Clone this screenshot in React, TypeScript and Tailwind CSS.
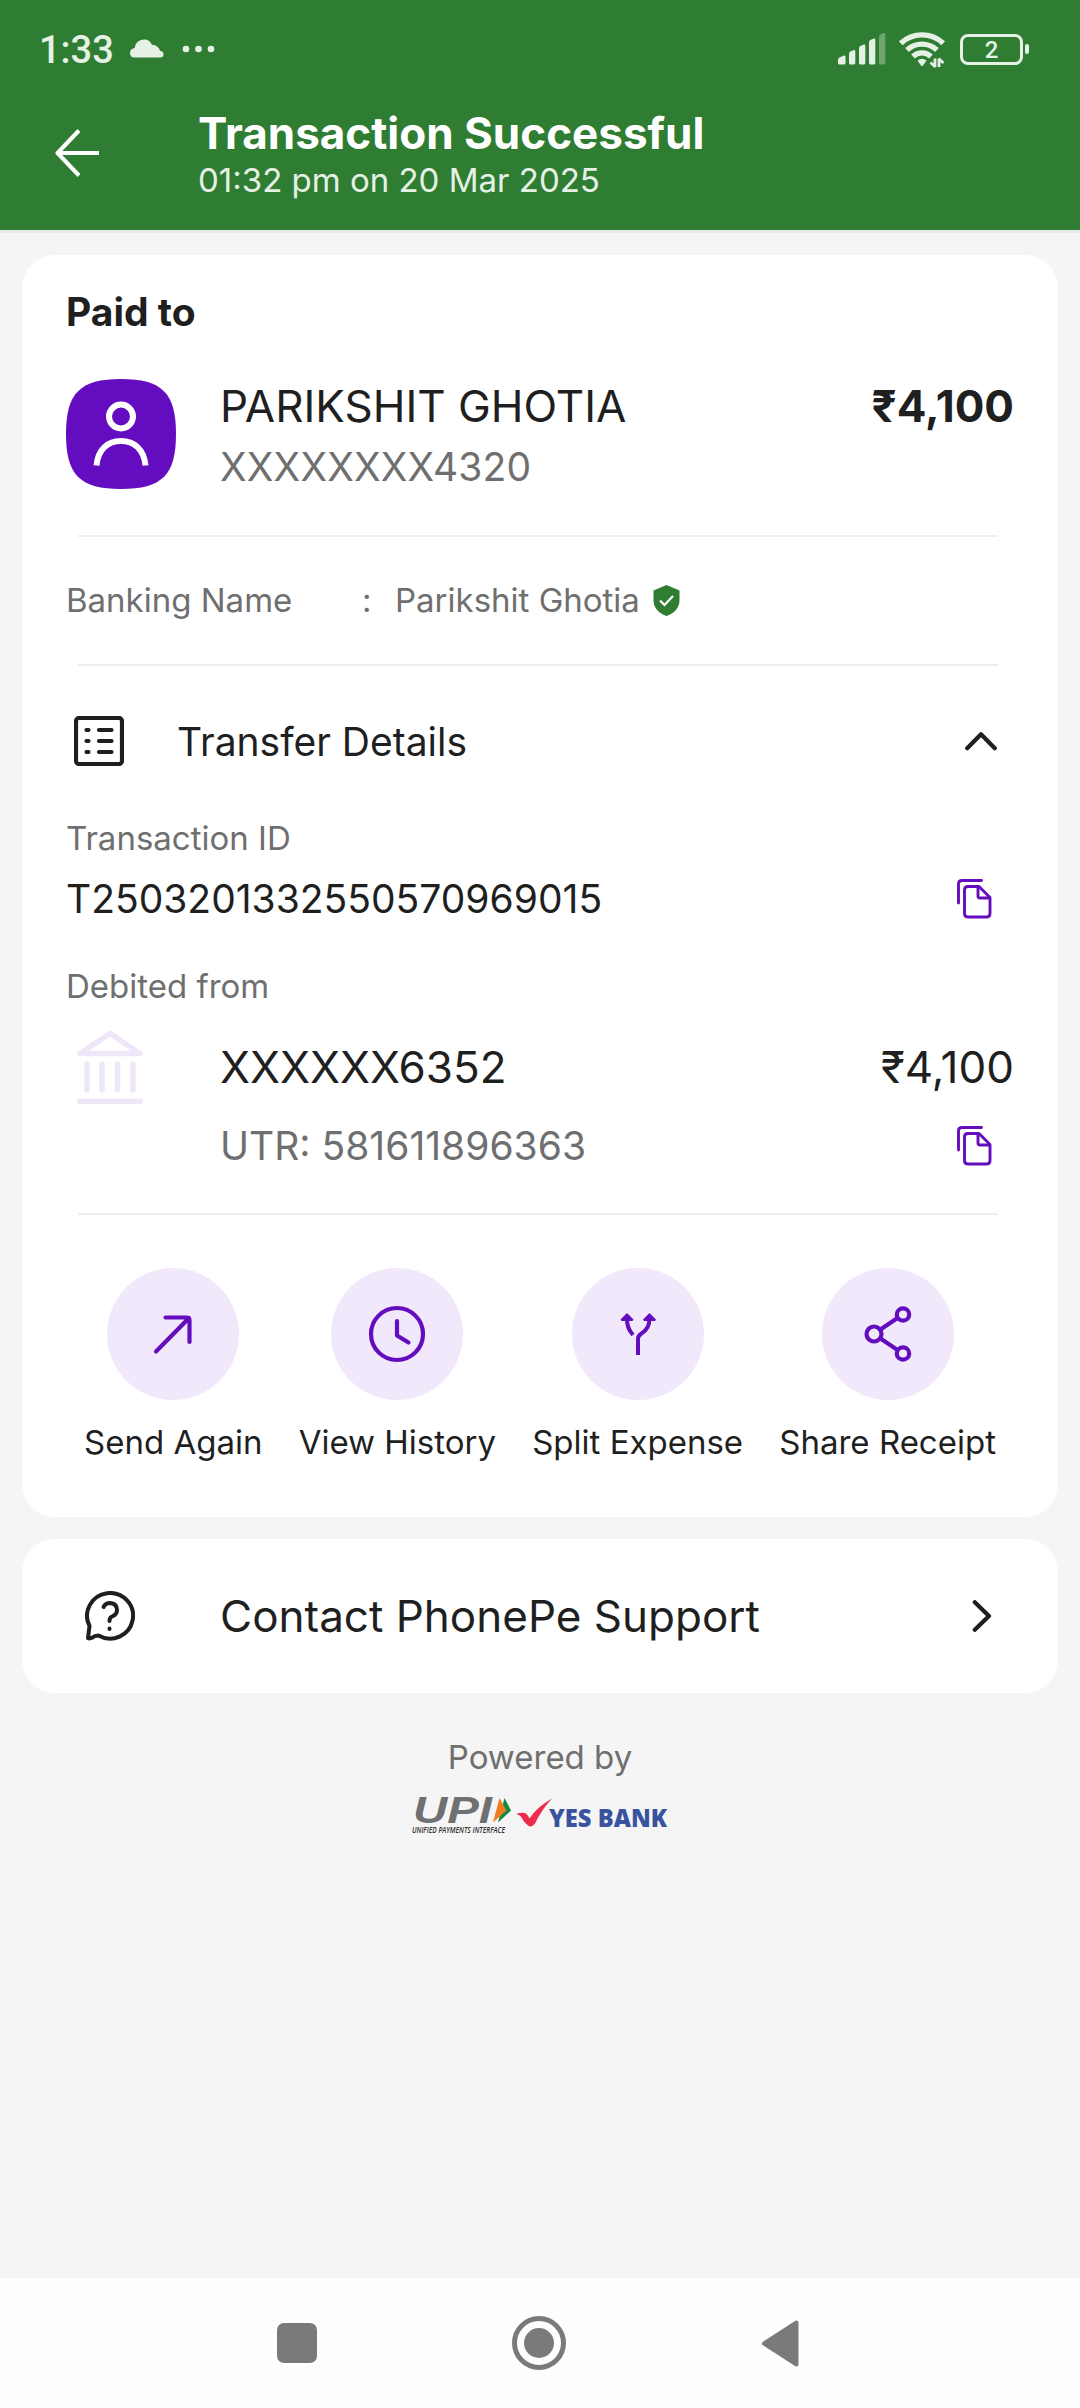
import type { ReactNode } from 'react';

const labelClass = 'text-[33px] leading-10 text-[#6f6f6f]';
const valueClass = 'text-[39px] leading-[48px]';

function StatusBar() {
  return (
    <div className="flex h-[76px] items-center justify-between pt-[22px] pr-[51px] pl-[39px] text-[#e6f1e6]">
      <div className="flex items-center">
        <span className="w-[91px] pt-0.5 font-['Roboto'] text-[38px] leading-[54px] font-medium">
          1:33
        </span>
        <svg width="34" height="20" viewBox="0 0 34 20" className="-mt-0.5" fill="currentColor">
          <path d="M4.500 19.500A4.500 4.800 0 0 1 0 15 5 5 0 0 1 4.700 10 9.200 9.500 0 0 1 22 6.800 8 8 0 0 1 30 13 3.300 3.300 0 0 1 31 19.500Z" />
        </svg>
        <svg width="34" height="8" viewBox="0 0 34 8" className="ml-[18px]" fill="currentColor">
          <circle cx="4" cy="4" r="3.300" />
          <circle cx="16.500" cy="4" r="3.300" />
          <circle cx="29" cy="4" r="3.300" />
        </svg>
      </div>
      <div className="flex items-center">
        <svg width="49" height="32" viewBox="0 0 49 32" fill="currentColor">
          <path d="M0 27q0-2 1.500-2.600l4-1.700q2-.7 2 1V30q0 1.500-1.500 1.500H1.500Q0 31.500 0 30Z" />
          <path d="M11 21q0-2 1.300-2.500l3-1.300q2-.7 2 1V30q0 1.500-1.500 1.500h-3.300Q11 31.500 11 30Z" />
          <path d="M21 15.500q0-2 1.300-2.500l3-1.300q2-.7 2 1V30q0 1.500-1.500 1.500h-3.300Q21 31.500 21 30Z" />
          <path d="M31 9.500q0-2 1.300-2.500l3-1.300q2-.7 2 1V30q0 1.500-1.500 1.500h-3.300Q31 31.500 31 30Z" />
          <path
            opacity=".35"
            d="M41 4q0-2 1.300-2.500l3-1.300q2-.7 2 1V30q0 1.500-1.500 1.500h-3.300Q41 31.500 41 30Z"
          />
        </svg>
        <svg width="47" height="38" viewBox="0 0 47 38" className="ml-3" fill="none">
          <g stroke="currentColor" strokeWidth="5.400">
            <path d="M1.800 13.300A31 31 0 0 1 44.200 13.300" />
            <path d="M8 20A22 22 0 0 1 38 20" />
            <path d="M14 26.500A13 13 0 0 1 32 26.500" />
          </g>
          <path d="M18.500 30.500q4.500-3.500 9 0L24 35.500q-1 1-2 0Z" fill="currentColor" />
          <path
            d="M36 28.500v8.500M36.500 37l-5-4.500M40 37v-8.500M39.500 28.500l5 4.500"
            stroke="currentColor"
            strokeWidth="2.800"
          />
        </svg>
        <div className="ml-[14px] flex h-[31px] w-[63px] items-center justify-center rounded-[8px] border-[3px] border-current pt-0.5 font-['Roboto'] text-[24px] leading-none font-medium">
          2
        </div>
        <div className="ml-[2px] h-[10px] w-1 rounded-sm bg-current" />
      </div>
    </div>
  );
}

function Divider() {
  return <div className="mr-4 ml-3 h-[2px] bg-[#eeeeee]" />;
}

function CopyIcon() {
  return (
    <svg
      width="35"
      height="40"
      viewBox="0 0 35 40"
      className="mr-[22px]"
      fill="none"
      stroke="#640dbe"
      strokeWidth="2.900"
      strokeLinecap="round"
      strokeLinejoin="round"
    >
      <path d="M1.500 24V5Q1.500 1.500 5 1.500H24.500" />
      <path d="M11 7.500H22L33 18.500V34.500Q33 38 29.500 38H11Q7.500 38 7.500 34.500V11Q7.500 7.500 11 7.500Z" />
      <path d="M21 8V17Q21 19 23 19H32.500" />
    </svg>
  );
}

function BankIcon() {
  return (
    <svg
      width="66"
      height="74"
      viewBox="0 0 66 74"
      fill="none"
      stroke="#efe6f9"
      strokeWidth="5.400"
      strokeLinecap="round"
      strokeLinejoin="round"
    >
      <path d="M33 3.500 63 23.500H3Z" />
      <path d="M10 34V60M25 34V60M40.500 34V60M56 34V60" />
      <path d="M2.700 71.200H63.300" />
    </svg>
  );
}

type ActionProps = { label: string; children: ReactNode };

function Action({ label, children }: ActionProps) {
  return (
    <button className="flex flex-col items-center">
      <span className="flex size-[132px] items-center justify-center rounded-full bg-[#f1e8fb]">
        <svg
          width="60"
          height="60"
          viewBox="0 0 60 60"
          fill="none"
          stroke="#640dbe"
          strokeWidth="4.200"
          strokeLinecap="round"
          strokeLinejoin="round"
        >
          {children}
        </svg>
      </span>
      <span className="mt-5 text-[33px] leading-[44px]">{label}</span>
    </button>
  );
}

function PaymentCard() {
  return (
    <section className="h-[1262px] rounded-[33px] bg-white px-11 pt-[33px]">
      <h2 className="text-[39px] leading-[48px] font-bold">Paid to</h2>
      <div className="mt-[43px] flex h-[110px] items-start">
        <svg width="110" height="110" viewBox="0 0 110 110" fill="none">
          <path
            d="M55 0C96 0 110 14 110 55S96 110 55 110 0 96 0 55 14 0 55 0Z"
            fill="#640dc0"
          />
          <circle cx="55" cy="37.500" r="12" stroke="#fff" strokeWidth="6" />
          <path d="M30.500 86.500C32 70 42 62 55 62S78 70 79.500 86.500" stroke="#fff" strokeWidth="6" />
        </svg>
        <div className="ml-11 flex-1">
          <p className="text-[44px] leading-[54px]">PARIKSHIT GHOTIA</p>
          <p className="mt-[11px] text-[39px] leading-[46px] tracking-[0.2px] text-[#6f6f6f]">
            XXXXXXXX4320
          </p>
        </div>
        <p className="text-[44px] leading-[54px] font-bold">₹4,100</p>
      </div>
      <div className="mt-[46px]">
        <Divider />
      </div>

      <div className="flex h-[127px] items-center text-[33px] text-[#6f6f6f]">
        <span className="w-[296px]">Banking Name</span>
        <span className="w-[33px]">:</span>
        <span>Parikshit Ghotia</span>
        <svg width="27" height="31" viewBox="0 0 27 31" className="ml-[13px]">
          <path d="M13.500 0 26.500 5.500V15Q26.500 26 13.500 31 .5 26 .5 15V5.500Z" fill="#2e7d32" />
          <path d="M7 15.500 11.500 20 20 11" fill="none" stroke="#fff" strokeWidth="2.200" />
        </svg>
      </div>
      <Divider />

      <div className="flex h-[150px] items-center">
        <svg width="50" height="50" viewBox="0 0 50 50" className="ml-2" fill="none" stroke="currentColor">
          <rect x="2" y="2" width="46" height="46" rx="3" strokeWidth="4.200" />
          <path
            d="M12.500 14H14.500M12.500 25H14.500M12.500 36H14.500M25 14H37.500M25 25H37.500M25 36H37.500"
            strokeWidth="4.200"
            strokeLinecap="round"
          />
        </svg>
        <h3 className="ml-[53px] flex-1 pt-[2px] text-[39px] leading-[48px]">Transfer Details</h3>
        <svg
          width="32"
          height="20"
          viewBox="0 0 32 20"
          className="mr-[17px]"
          fill="none"
          stroke="currentColor"
          strokeWidth="4.200"
          strokeLinecap="round"
          strokeLinejoin="round"
        >
          <path d="M2.200 17.200 16 3.200 29.800 17.200" />
        </svg>
      </div>

      <p className={`mt-[2px] ${labelClass}`}>Transaction ID</p>
      <div className="mt-[17px] flex h-12 items-center justify-between">
        <span className={valueClass}>T2503201332550570969015</span>
        <CopyIcon />
      </div>
      <p className={`mt-[43px] ${labelClass}`}>Debited from</p>
      <div className="mt-6 flex h-[74px] items-center pl-[11px] text-[44px] leading-[54px]">
        <BankIcon />
        <span className="ml-[77px] flex-1">XXXXXX6352</span>
        <span>₹4,100</span>
      </div>
      <div className="mt-[18px] flex h-12 items-center justify-between pl-[154px]">
        <span className={`text-[#6f6f6f] ${valueClass}`}>UTR: 581611896363</span>
        <CopyIcon />
      </div>
      <div className="mt-[43px]">
        <Divider />
      </div>

      <div className="mt-[53px] flex justify-between pr-[18px] pl-[18px]">
        <Action label="Send Again">
          <path d="M13 47.500 46 14M22.500 13.500H43.500Q46.500 13.500 46.500 16.500V38" />
        </Action>
        <Action label="View History">
          <circle cx="30" cy="30" r="26" />
          <path d="M30 17V31.500L41.500 38.500" />
        </Action>
        <Action label="Split Expense">
          <path
            d="M30 51V35Q30 31.500 33.500 29.500 41.500 25 41.500 14M19 14Q18.500 24 25 31"
            strokeWidth="4"
            strokeLinecap="butt"
          />
          <path
            d="M19 10.500 13.800 15.800H24.200ZM41.500 10.500 36.300 15.800H46.700Z"
            fill="#640dbe"
            strokeWidth="2.200"
          />
        </Action>
        <Action label="Share Receipt">
          <circle cx="16" cy="30" r="7.500" />
          <circle cx="45" cy="10.500" r="6.200" />
          <circle cx="45" cy="49.500" r="6.200" />
          <path d="M22.500 25.500 39.500 14M22.500 34.500 39.500 46" />
        </Action>
      </div>
    </section>
  );
}

function SupportCard() {
  return (
    <section className="mt-[22px] flex h-[154px] items-center rounded-[33px] bg-white pr-[66px] pl-[63px]">
      <svg
        width="50"
        height="50"
        viewBox="0 0 50 50"
        fill="none"
        stroke="currentColor"
        strokeWidth="4"
        strokeLinecap="round"
        strokeLinejoin="round"
      >
        <path d="M3 47 4.500 35A23 22.800 0 1 1 13.500 44.500Q9.500 44.500 7.500 46.500 4.500 48 3 47Z" />
        <path d="M18.500 16Q20.500 12 25 12 32 12.500 32 19 32 23.500 27 25.500 24.500 26.500 24.500 30" />
        <path d="M24.500 37.500V38" />
      </svg>
      <span className="ml-[85px] flex-1 text-[44px] leading-[54px]">Contact PhonePe Support</span>
      <svg
        width="20"
        height="32"
        viewBox="0 0 20 32"
        fill="none"
        stroke="currentColor"
        strokeWidth="4.200"
        strokeLinecap="round"
        strokeLinejoin="round"
      >
        <path d="M2.800 2.200 17 16 2.800 29.800" />
      </svg>
    </section>
  );
}

function UpiLogo() {
  return (
    <svg width="100" height="38" viewBox="0 0 100 38" className="overflow-visible">
      <text
        x="1"
        y="26"
        textLength="79"
        lengthAdjust="spacingAndGlyphs"
        fill="#6f7072"
        className="font-['Liberation_Sans'] text-[36px] font-bold italic"
      >
        UPI
      </text>
      <path d="M92.500 1 99 13.500 86 25.500Z" fill="#0e8a43" />
      <path d="M87.500 1 94.500 13.500 81 25.500Z" fill="#f07c22" />
      <text
        x="0"
        y="36"
        textLength="93"
        lengthAdjust="spacingAndGlyphs"
        fill="#2f2f2f"
        className="font-['Open_Sans'] text-[8px] font-semibold italic"
      >
        UNIFIED PAYMENTS INTERFACE
      </text>
    </svg>
  );
}

function YesBankLogo() {
  return (
    <svg width="152" height="34" viewBox="0 0 152 34" className="ml-1 overflow-visible">
      <path
        d="M0 17Q7 14.500 10.500 17 12.500 19 13.500 21.500 21 10 36 1.500 26 12 19 26.500 15.500 31 12 28.500 8 25.500 5.500 20.500 4 17.500 0 17Z"
        fill="#ec2a4b"
      />
      <text
        x="33"
        y="29.500"
        textLength="118"
        lengthAdjust="spacingAndGlyphs"
        fill="#3a539f"
        className="font-['Open_Sans'] text-[25px] font-extrabold"
      >
        YES BANK
      </text>
    </svg>
  );
}

function NavigationBar() {
  return (
    <nav className="flex h-[130px] items-center justify-between bg-[#fefefe] pr-[281px] pl-[277px] text-[#7a7a7a]">
      <div className="size-10 rounded-[7px] bg-current" />
      <div className="flex size-[54px] items-center justify-center rounded-full border-[5px] border-current">
        <div className="size-[30px] rounded-full bg-current" />
      </div>
      <svg
        width="38"
        height="47"
        viewBox="0 0 38 47"
        fill="currentColor"
        stroke="currentColor"
        strokeWidth="4"
        strokeLinejoin="round"
      >
        <path d="M3 23.500 35.500 2.500V44.500Z" />
      </svg>
    </nav>
  );
}

export default function App() {
  return (
    <div className="flex h-[2408px] w-[1080px] flex-col overflow-hidden bg-[#f5f5f5] font-['Inter',sans-serif] text-[#1f1f1f]">
      <header className="h-[230px] shrink-0 bg-[#2f7d32]">
        <StatusBar />
        <div className="flex h-[154px] items-center pl-[55px] text-white">
          <svg
            width="44"
            height="48"
            viewBox="0 0 44 48"
            fill="none"
            stroke="currentColor"
            strokeWidth="4"
            strokeLinejoin="round"
          >
            <path d="M24 1.500 2.500 24 24 46.500M3 24H44" />
          </svg>
          <div className="ml-[99px]">
            <h1 className="text-[44px] leading-[54px] font-bold">Transaction Successful</h1>
            <p className="text-[33px] leading-10 text-[#e6f1e6]">01:32 pm on 20 Mar 2025</p>
          </div>
        </div>
      </header>
      <div className="h-[3px] shrink-0 bg-[#e9e9e9]" />
      <main className="flex-1 px-[22px] pt-[22px]">
        <PaymentCard />
        <SupportCard />
        <p className={`mt-11 text-center ${labelClass}`}>Powered by</p>
        <div className="mt-5 flex justify-center">
          <UpiLogo />
          <YesBankLogo />
        </div>
      </main>
      <NavigationBar />
    </div>
  );
}
